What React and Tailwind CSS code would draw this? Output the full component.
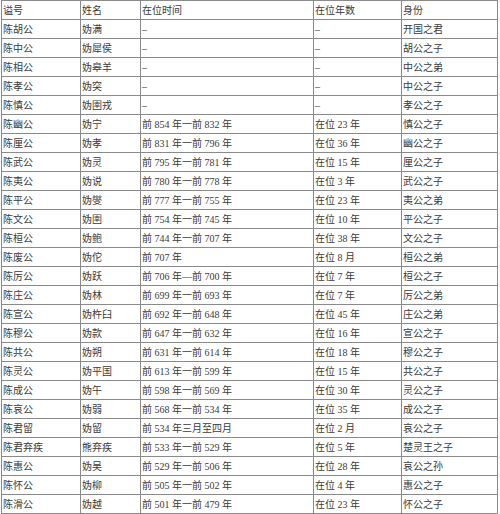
const COLS = ["w-[79px]", "w-[60px]", "w-[173px]", "w-[88px]", "w-[96px]"];

const HEAD = ["谥号", "姓名", "在位时间", "在位年数", "身份"];

const ROWS = [
  ["陈胡公", "妫满", "–", "–", "开国之君"],
  ["陈中公", "妫犀侯", "–", "–", "胡公之子"],
  ["陈相公", "妫皋羊", "–", "–", "中公之弟"],
  ["陈孝公", "妫突", "–", "–", "中公之子"],
  ["陈慎公", "妫圉戎", "–", "–", "孝公之子"],
  ["陈幽公", "妫宁", "前 854 年一前 832 年", "在位 23 年", "慎公之子"],
  ["陈厘公", "妫孝", "前 831 年一前 796 年", "在位 36 年", "幽公之子"],
  ["陈武公", "妫灵", "前 795 年一前 781 年", "在位 15 年", "厘公之子"],
  ["陈夷公", "妫说", "前 780 年一前 778 年", "在位 3 年", "武公之子"],
  ["陈平公", "妫燮", "前 777 年一前 755 年", "在位 23 年", "夷公之弟"],
  ["陈文公", "妫圉", "前 754 年一前 745 年", "在位 10 年", "平公之子"],
  ["陈桓公", "妫鲍", "前 744 年一前 707 年", "在位 38 年", "文公之子"],
  ["陈废公", "妫佗", "前 707 年", "在位 8 月", "桓公之弟"],
  ["陈厉公", "妫跃", "前 706 年—前 700 年", "在位 7 年", "桓公之子"],
  ["陈庄公", "妫林", "前 699 年一前 693 年", "在位 7 年", "厉公之弟"],
  ["陈宣公", "妫杵臼", "前 692 年一前 648 年", "在位 45 年", "庄公之弟"],
  ["陈穆公", "妫款", "前 647 年一前 632 年", "在位 16 年", "宣公之子"],
  ["陈共公", "妫朔", "前 631 年一前 614 年", "在位 18 年", "穆公之子"],
  ["陈灵公", "妫平国", "前 613 年一前 599 年", "在位 15 年", "共公之子"],
  ["陈成公", "妫午", "前 598 年一前 569 年", "在位 30 年", "灵公之子"],
  ["陈哀公", "妫弱", "前 568 年一前 534 年", "在位 35 年", "成公之子"],
  ["陈君留", "妫留", "前 534 年三月至四月", "在位 2 月", "哀公之子"],
  ["陈君弃疾", "熊弃疾", "前 533 年一前 529 年", "在位 5 年", "楚灵王之子"],
  ["陈惠公", "妫吴", "前 529 年一前 506 年", "在位 28 年", "哀公之孙"],
  ["陈怀公", "妫柳", "前 505 年一前 502 年", "在位 4 年", "惠公之子"],
  ["陈滑公", "妫越", "前 501 年一前 479 年", "在位 23 年", "怀公之子"],
];

function Row({ cells }) {
  return (
    <tr className="h-[19px]">
      {cells.map((c, i) => (
        <td key={i}
          className={`${COLS[i]} h-[19px] border border-[#8a8a8a] pl-px pt-[2px] pb-0 leading-none align-middle whitespace-nowrap`}>
          {c}
        </td>
      ))}
    </tr>
  );
}

export default function App() {
  return (
    <div className="w-[500px] h-[514px] bg-white overflow-hidden pl-px">
      <table
        className="table-fixed border-collapse text-[10px] text-[#3a3a3a]"
        style={{ fontFamily: '"Liberation Serif", "Noto Sans CJK SC", serif' }}>
        <tbody>
          <Row cells={HEAD} />
          {ROWS.map((r) => <Row key={r[0]} cells={r} />)}
        </tbody>
      </table>
    </div>
  );
}
